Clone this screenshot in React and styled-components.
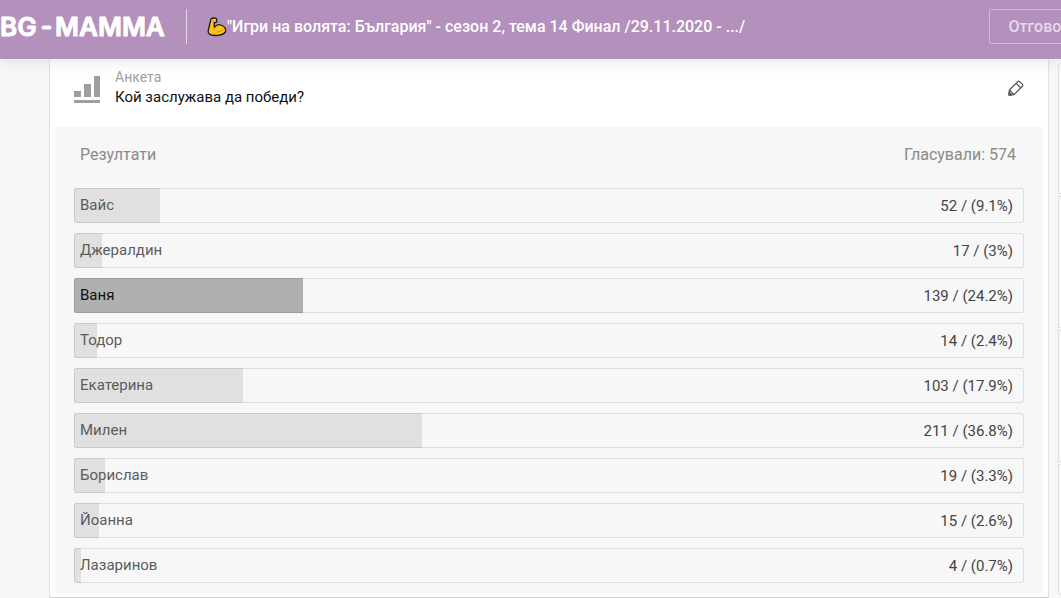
import React from 'react';
import styled, { createGlobalStyle } from 'styled-components';

const GlobalStyle = createGlobalStyle`
  * {
    box-sizing: border-box;
  }

  body {
    margin: 0;
    background: #f7f7f7;
    color: #111;
    font-family: Roboto, "Liberation Sans", sans-serif;
    font-size: 15px;
    line-height: 20px;
    overflow-x: hidden;
  }
`;

// Header

const Header = styled.header`
  position: relative;
  display: flex;
  align-items: center;
  height: 59px;
  padding-bottom: 6px;
  background: #b490bd;
  color: #fff;
  box-shadow: 0 2px 16px rgba(0, 0, 0, 0.1);
`;

const Logo = styled.a`
  display: flex;
  width: 186px;
  flex-shrink: 0;
`;

const Title = styled.h1`
  display: flex;
  align-items: center;
  flex: 1;
  min-width: 0;
  height: 35px;
  margin: 0;
  padding-left: 20px;
  border-left: 1px solid #e3d5e6;
  font-size: 16px;
  font-weight: 500;
  white-space: nowrap;
`;

const ReplyClip = styled.div`
  flex: 0 0 72px;
  overflow: hidden;
`;

const ReplyButton = styled.button`
  width: 110px;
  height: 35px;
  padding: 0;
  border: 1px solid #d0b8d6;
  border-radius: 2px;
  background: none;
  color: #e6dae9;
  font: 500 16px/20px Roboto, sans-serif;
  cursor: pointer;
`;

// Poll

const Page = styled.div`
  display: flex;
  gap: 9px;
  padding-left: 49px;
`;

const Card = styled.main`
  flex: 1;
  min-width: 0;
  padding: 0 5px 4px;
  background: #fff;
  border: 1px solid #e2e2e2;
  border-top: 0;
  border-bottom-color: #ccc;
`;

const PollHead = styled.div`
  display: flex;
  align-items: center;
  height: 68px;
  padding: 0 19px 8px;
`;

const PollTitle = styled.div`
  flex: 1;
  padding: 0 0 4px 15px;
`;

const PollKind = styled.div`
  color: #9e9e9e;
  font-size: 14px;
`;

const Question = styled.h2`
  margin: 0;
  font-size: 15px;
  font-weight: 400;
`;

const EditButton = styled.button`
  display: flex;
  padding: 0 0 2px;
  border: 0;
  background: none;
  cursor: pointer;
`;

const Results = styled.section`
  padding: 18px 19px 10px;
  background: #f7f7f7;
`;

const ResultsHead = styled.div`
  display: flex;
  justify-content: space-between;
  padding: 0 8px 0 6px;
  margin-bottom: 23px;
  color: #8a8a8a;
  font-size: 16px;
`;

const Options = styled.ul`
  display: grid;
  gap: 10px;
  margin: 0;
  padding: 0;
  list-style: none;
`;

const Option = styled.li`
  position: relative;
  display: flex;
  align-items: center;
  justify-content: space-between;
  height: 35px;
  padding: 0 11px 0 6px;
  color: ${({ $voted }) => ($voted ? '#111' : '#5c5c5c')};

  &::after {
    content: '';
    position: absolute;
    inset: 0;
    border: 1px solid rgba(0, 0, 0, 0.1);
    border-radius: 2px;
  }
`;

const Track = styled.span`
  position: absolute;
  inset: 0 4px 0 0;
`;

const Bar = styled.span`
  display: block;
  height: 100%;
  border-radius: 2px 0 0 2px;
  background: ${({ $voted }) => ($voted ? '#b0b0b0' : '#e0e0e0')};
`;

const Label = styled.span`
  position: relative;
  padding-bottom: 2px;
`;

const Votes = styled.span`
  position: relative;
  color: #444;
`;

// Sidebar

const Sidebar = styled.aside`
  display: grid;
  gap: 2px;
  flex: 0 0 3px;
  padding: 3px 0 2px;
  overflow: hidden;
`;

const SideItem = styled.div`
  width: 300px;
  border: 1px solid #dedee2;
  background: #f9f9fb;

  &:first-child {
    border-radius: 5px 5px 0 0;
  }

  &:last-child {
    border-radius: 0 0 5px 5px;
  }
`;

const OPTIONS = [
  { name: 'Вайс', votes: 52, percent: 9.1 },
  { name: 'Джералдин', votes: 17, percent: 3 },
  { name: 'Ваня', votes: 139, percent: 24.2, voted: true },
  { name: 'Тодор', votes: 14, percent: 2.4 },
  { name: 'Екатерина', votes: 103, percent: 17.9 },
  { name: 'Милен', votes: 211, percent: 36.8 },
  { name: 'Борислав', votes: 19, percent: 3.3 },
  { name: 'Йоанна', votes: 15, percent: 2.6 },
  { name: 'Лазаринов', votes: 4, percent: 0.7 },
];

const LogoMark = () => (
  <svg
    width="170"
    height="28"
    viewBox="0 0 170 28"
    fill="#fff"
    stroke="#fff"
    strokeWidth="1"
    strokeLinejoin="round"
    fontFamily="Inter, sans-serif"
    fontSize="26"
    fontWeight="600"
  >
    <text x="0" y="23">BG</text>
    <rect x="42" y="13" width="9" height="3" rx="1" />
    <text x="55" y="23">MAMMA</text>
  </svg>
);

const BicepsIcon = () => (
  <svg width="20" height="20" viewBox="0 0 20 20" aria-hidden="true">
    <path
      d="M4 2 Q6 .6 8.6 1.2 Q10.3 2 9.8 4.4 Q9 6 7.2 5.7 L7.3 10.2 Q10.5 6.8 14 8 Q19 10 18.7 14 Q18 17.4 11 18.4 Q4.5 18.9 2 16.8 Q.6 15 1.6 12 Q3 6 4 2Z"
      fill="#fcc21b"
      stroke="#1c1a17"
      strokeWidth="1.3"
      strokeLinejoin="round"
    />
    <path d="M5.4 4.2 L7.3 4.4 M6.4 11.2 Q7.4 12 7.3 13.2 M10.5 14.8 Q14.5 15 16 12.4" fill="none" stroke="#d98a1c" strokeWidth="1" />
  </svg>
);

const ChartIcon = () => (
  <svg width="26" height="28" viewBox="0 0 26 28" fill="#9e9e9e" aria-hidden="true">
    <rect x="0" y="16" width="7" height="6" />
    <rect x="10" y="9" width="7" height="13" />
    <rect x="20" y="1" width="6" height="21" />
    <rect x="0" y="25" width="26" height="3" />
  </svg>
);

const PencilIcon = () => (
  <svg width="16" height="16" viewBox="0 0 16 16" fill="none" stroke="#555" strokeWidth="1.3" strokeLinejoin="round">
    <path d="M1 15 L1.4 10 L9.8 1.6 Q10.7 .9 11.6 1.6 L14.4 4.4 Q15.1 5.3 14.4 6.2 L6 14.6 Z" />
    <path d="M8.2 3.4 L12.6 7.8 M1.4 10 L6 14.6" />
    <path d="M1 15 L1.2 12.4 L3.6 14.8 Z" fill="#555" />
  </svg>
);

const App = () => {
  const total = OPTIONS.reduce((sum, option) => sum + option.votes, 0);

  return (
    <>
      <GlobalStyle />
      <Header>
        <Logo href="#" aria-label="BG-MAMMA">
          <LogoMark />
        </Logo>
        <Title>
          <BicepsIcon />
          "Игри на волята: България" - сезон 2, тема 14 Финал /29.11.2020 - .../
        </Title>
        <ReplyClip>
          <ReplyButton type="button">Отговори</ReplyButton>
        </ReplyClip>
      </Header>
      <Page>
        <Card>
          <PollHead>
            <ChartIcon />
            <PollTitle>
              <PollKind>Анкета</PollKind>
              <Question>Кой заслужава да победи?</Question>
            </PollTitle>
            <EditButton type="button" aria-label="Редактирай">
              <PencilIcon />
            </EditButton>
          </PollHead>
          <Results>
            <ResultsHead>
              <span>Резултати</span>
              <span>Гласували: {total}</span>
            </ResultsHead>
            <Options>
              {OPTIONS.map(({ name, votes, percent, voted }) => (
                <Option key={name} $voted={voted}>
                  <Track>
                    <Bar $voted={voted} style={{ width: `${percent}%` }} />
                  </Track>
                  <Label>{name}</Label>
                  <Votes>{votes} / ({percent}%)</Votes>
                </Option>
              ))}
            </Options>
          </Results>
        </Card>
        <Sidebar>
          <SideItem />
          <SideItem />
          <SideItem />
          <SideItem />
        </Sidebar>
      </Page>
    </>
  );
};

export default App;
